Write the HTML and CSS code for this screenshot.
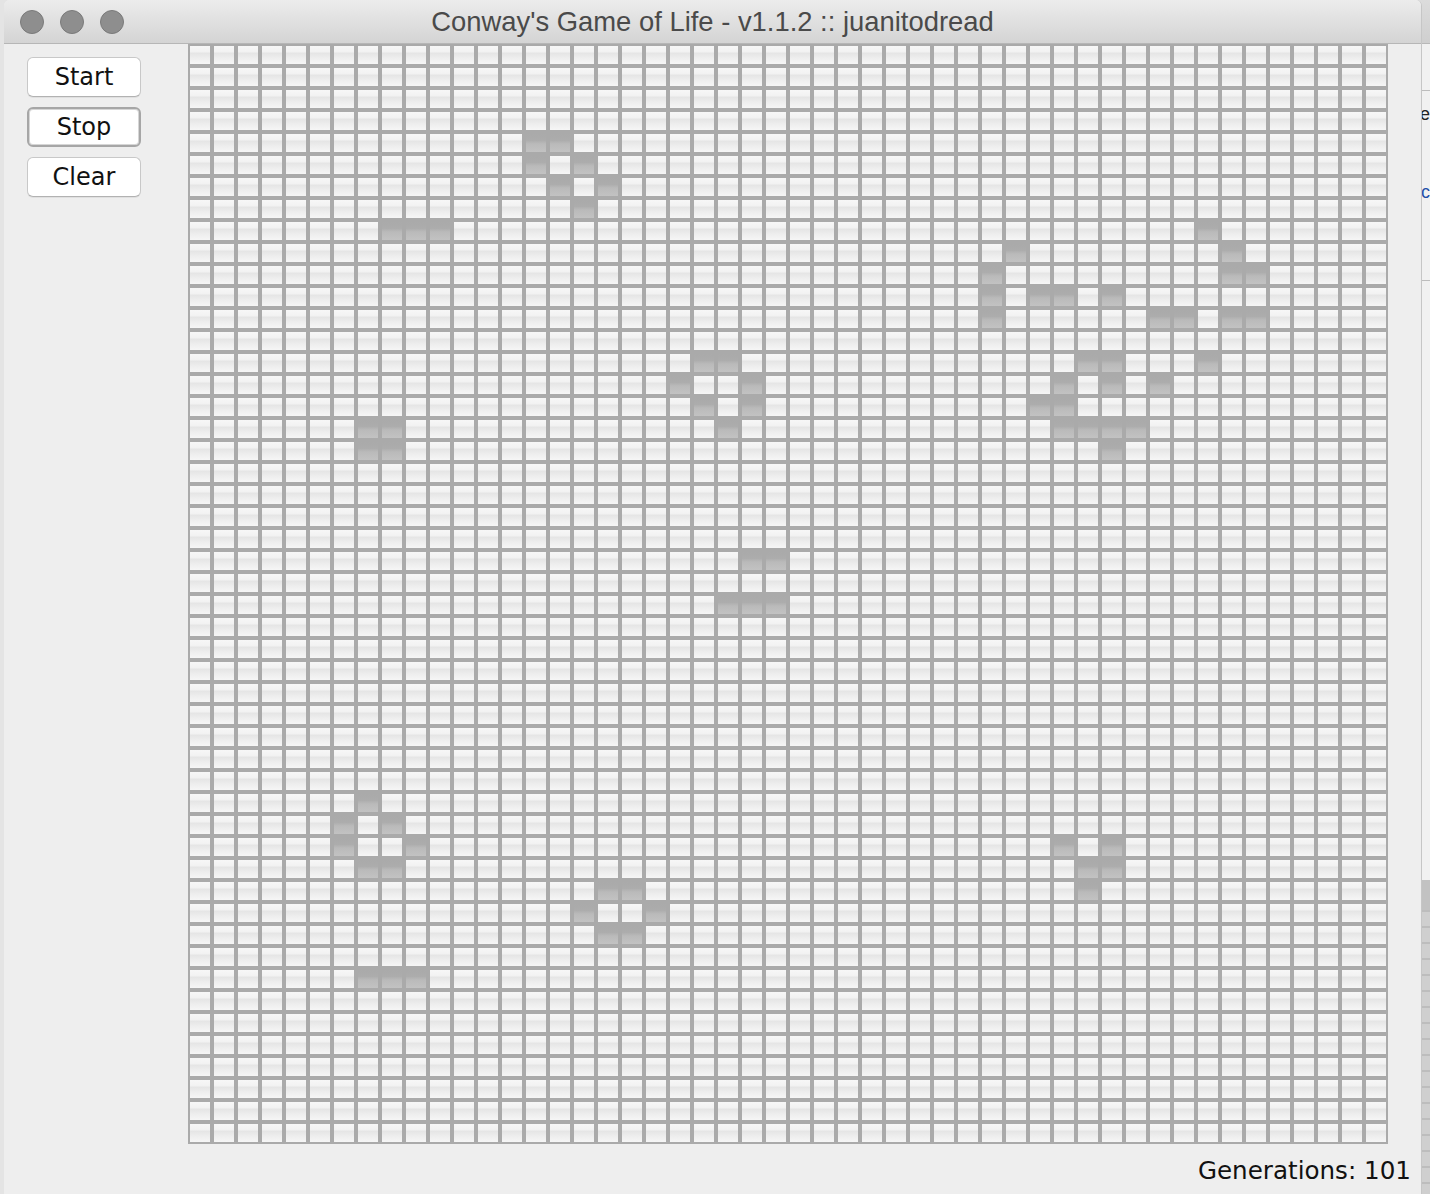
FILE: index.html
```html
<!DOCTYPE html>
<html lang="en">
<head>
  <meta charset="UTF-8">
  <title>Conway's Game of Life - v1.1.2 :: juanitodread</title>
  <link rel="stylesheet" href="styles.css">
</head>
<body>
  <!-- window sitting behind the app, only its left edge shows -->
  <div class="back-window">
    <div class="back-titlebar"></div>
    <div class="back-line back-line-1"></div>
    <span class="back-text back-text-1">ne</span>
    <span class="back-text back-text-2">ac</span>
    <div class="back-line back-line-2"></div>
    <div class="back-scroll"></div>
  </div>

  <div class="window">
    <div class="titlebar">
      <div class="lights">
        <span class="light"></span>
        <span class="light"></span>
        <span class="light"></span>
      </div>
      <div class="title">Conway's Game of Life - v1.1.2 :: juanitodread</div>
    </div>

    <div class="content">
      <div class="controls">
        <button class="btn" id="start">Start</button>
        <button class="btn btn-focus" id="stop">Stop</button>
        <button class="btn" id="clear">Clear</button>
      </div>

      <div class="main">
        <div class="board" id="board"></div>
        <div class="status">Generations: <span id="generations">101</span></div>
      </div>
    </div>
  </div>

  <script>
    const SIZE = 50;
    const board = document.getElementById('board');

    // live cells of generation 101, as [row, col]
    const alive = [
      [4,14],[4,15],[5,14],[5,16],[6,15],[6,17],[7,16],
      [8,8],[8,9],[8,10],
      [8,42],[9,34],[9,43],[10,33],[10,43],[10,44],
      [11,33],[11,35],[11,36],[11,38],
      [12,33],[12,40],[12,41],[12,43],[12,44],
      [14,37],[14,38],[14,42],[15,36],[15,38],[15,40],
      [16,35],[16,36],[17,36],[17,37],[17,38],[17,39],[18,38],
      [14,21],[14,22],[15,20],[15,23],[16,21],[16,23],[17,22],
      [17,7],[17,8],[18,7],[18,8],
      [23,23],[23,24],[25,22],[25,23],[25,24],
      [34,7],[35,6],[35,8],[36,6],[36,9],[37,7],[37,8],
      [38,17],[38,18],[39,16],[39,19],[40,17],[40,18],
      [42,7],[42,8],[42,9],
      [36,36],[36,38],[37,37],[37,38],[38,37]
    ];

    const live = new Set(alive.map(([r, c]) => r * SIZE + c));

    for (let i = 0; i < SIZE * SIZE; i++) {
      const cell = document.createElement('div');
      cell.classList.add('cell');
      if (live.has(i)) cell.classList.add('alive');
      board.appendChild(cell);
    }
  </script>
</body>
</html>
```

FILE: styles.css
```css
* {
  box-sizing: border-box;
}

html, body {
  height: 100%;
}

body {
  margin: 0;
  overflow: hidden;
  background: #e4e4e4;
  font-family: "DejaVu Sans", "Liberation Sans", sans-serif;
  position: relative;
}

/* ---- window behind ---- */
.back-window {
  position: absolute;
  top: 0;
  left: 1300px;
  width: 130px;
  height: 100%;
  background: #f1f1f1;
  border-left: 1px solid #c4c4c4;
}

.back-titlebar {
  height: 44px;
  background: linear-gradient(#dcdcdc, #cfcfcf);
  border-bottom: 1px solid #b8b8b8;
}

.back-line {
  position: absolute;
  left: 0;
  right: 0;
  height: 1px;
  background: #bdbdbd;
}

.back-line-1 { top: 90px; }
.back-line-2 { top: 280px; }

.back-text {
  position: absolute;
  right: 0;
  font-family: "Liberation Sans", sans-serif;
  font-size: 18px;
}

.back-text-1 { top: 104px; color: #222; }
.back-text-2 { top: 182px; color: #1f4fa8; }

.back-scroll {
  position: absolute;
  top: 880px;
  left: 0;
  right: 0;
  bottom: 0;
  background: repeating-linear-gradient(#bdbdbd 0, #bdbdbd 2px, #cfcfcf 2px, #cfcfcf 16px);
  border-top: 30px solid #c2c2c2;
}

/* ---- main window ---- */
.window {
  position: relative;
  z-index: 1;
  margin-left: 4px;
  width: 1418px;
  height: 100%;
  background: #eeeeee;
  border-right: 1px solid #c6c6c6;
  border-radius: 6px 6px 0 0;
  overflow: hidden;
  display: flex;
  flex-direction: column;
}

.titlebar {
  height: 44px;
  flex: none;
  display: flex;
  align-items: center;
  background: linear-gradient(#ececec, #d4d4d4);
  border-bottom: 1px solid #b6b6b6;
  position: relative;
}

.lights {
  display: flex;
  gap: 16px;
  padding-left: 16px;
}

.light {
  width: 24px;
  height: 24px;
  border-radius: 50%;
  background: #8e8e8e;
  border: 1px solid #7a7a7a;
}

.title {
  position: absolute;
  left: 0;
  right: 0;
  top: 6px;
  text-align: center;
  font-family: "Liberation Sans", sans-serif;
  font-size: 27.4px;
  line-height: 32px;
  color: #4a4a4a;
  pointer-events: none;
}

.content {
  flex: 1;
  display: flex;
  min-height: 0;
}

.controls {
  display: flex;
  flex-direction: column;
  gap: 10px;
  padding: 13px 0 0 23px;
  width: 184px;
  flex: none;
}

.btn {
  width: 114px;
  height: 40px;
  background: #ffffff;
  border: 1px solid #c8c8c8;
  border-bottom-color: #b2b2b2;
  border-radius: 6px;
  box-shadow: 0 1px 0 rgba(0, 0, 0, 0.06);
  font-family: "DejaVu Sans", sans-serif;
  font-size: 24px;
  color: #111;
  padding: 0;
  cursor: pointer;
}

.btn-focus {
  border: 2px solid #a6a6a6;
  box-shadow: inset 0 0 0 1px #d6d6d6;
}

.main {
  flex: 1;
  display: flex;
  flex-direction: column;
  padding-right: 10px;
}

.board {
  display: grid;
  grid-template-columns: repeat(50, 24px);
  grid-template-rows: repeat(50, 22px);
  width: 1200px;
}

.cell {
  border: 2px solid #aaaaaa;
  background: linear-gradient(#f7f7f7 0%, #f2f2f2 32%, #e5e5e5 40%, #ededed 65%, #f6f6f6 100%);
}

.cell.alive {
  background: linear-gradient(#aaaaaa 0%, #acacac 35%, #bababa 55%, #c2c2c2 100%);
}

.status {
  text-align: right;
  font-size: 24.6px;
  color: #111;
  padding-top: 12px;
}
```
